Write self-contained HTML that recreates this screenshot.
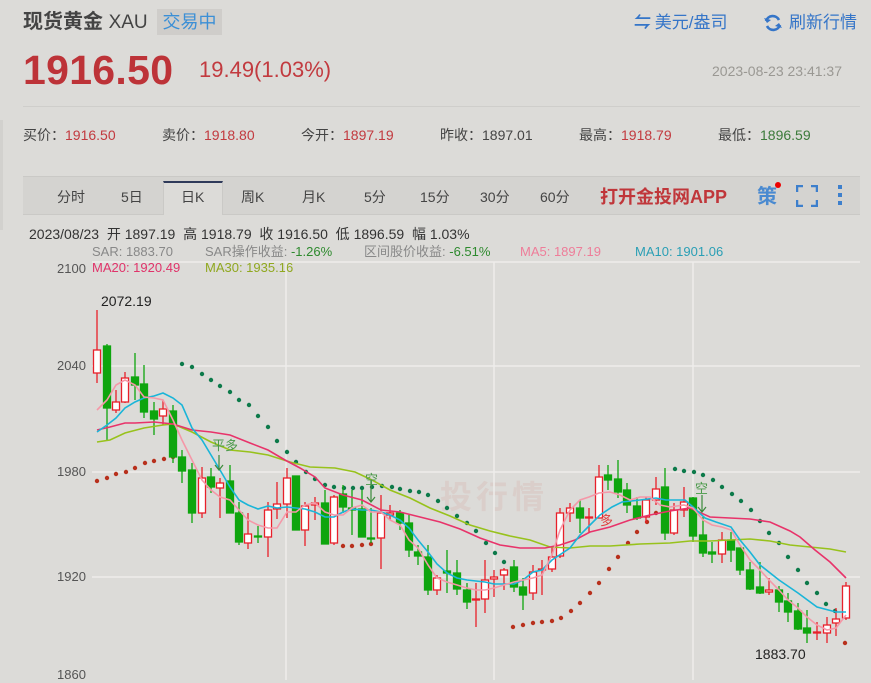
<!DOCTYPE html>
<html><head><meta charset="utf-8"><style>
*{margin:0;padding:0;box-sizing:border-box}
body{width:871px;height:680px;overflow:hidden;background:#dcdbd8;font-family:"Liberation Sans","Noto Sans CJK SC",sans-serif;position:relative;color:#333}
.a{position:absolute;white-space:nowrap}
.r{color:#c23a3f}.g{color:#3b7a3a}
</style></head><body>
<div class="a" style="left:0;top:120px;width:3px;height:110px;background:#d2d1ce"></div>
<div class="a" style="left:23px;top:9px;font-size:20px;font-weight:bold;color:#444;line-height:26px">现货黄金 <span style="font-weight:normal;font-size:19px">XAU</span></div>
<div class="a" style="left:157px;top:9px;width:65px;height:26px;background:#cfcdca;color:#3b8fd6;font-size:18px;line-height:26px;text-align:center">交易中</div>
<div class="a" style="left:634px;top:11px;font-size:17px;color:#3575c8;line-height:24px"><span style="font-weight:bold;letter-spacing:-1px">⇋</span> 美元/盎司</div>
<svg class="a" style="left:763px;top:13px" width="20" height="20" viewBox="0 0 20 20"><path d="M16 7A7 7 0 0 0 3 8M4 13a7 7 0 0 0 13-1" fill="none" stroke="#3575c8" stroke-width="2.6"/><path d="M1 5l3 5 4-3zM19 15l-3-5-4 3z" fill="#3575c8"/></svg>
<div class="a" style="left:789px;top:11px;font-size:17px;color:#3575c8;line-height:24px">刷新行情</div>
<div class="a r" style="left:23px;top:47px;font-size:41px;font-weight:bold;line-height:46px;color:#bd3338;letter-spacing:0.3px">1916.50</div>
<div class="a r" style="left:199px;top:56px;font-size:22px;line-height:28px">19.49(1.03%)</div>
<div class="a" style="left:712px;top:62px;font-size:14px;color:#9a9893;line-height:18px">2023-08-23 23:41:37</div>
<div class="a" style="left:23px;top:106px;width:837px;height:1px;background:#cfcecb"></div>
<div class="a" style="left:23px;top:126px;font-size:14px;line-height:18px;color:#444">买价：<span class="r">1916.50</span></div>
<div class="a" style="left:162px;top:126px;font-size:14px;line-height:18px;color:#444">卖价：<span class="r">1918.80</span></div>
<div class="a" style="left:301px;top:126px;font-size:14px;line-height:18px;color:#444">今开：<span class="r">1897.19</span></div>
<div class="a" style="left:440px;top:126px;font-size:14px;line-height:18px;color:#444">昨收：1897.01</div>
<div class="a" style="left:579px;top:126px;font-size:14px;line-height:18px;color:#444">最高：<span class="r">1918.79</span></div>
<div class="a" style="left:718px;top:126px;font-size:14px;line-height:18px;color:#444">最低：<span class="g">1896.59</span></div>
<div class="a" style="left:23px;top:176px;width:837px;height:39px;background:#d4d3d0;border-top:1px solid #cac9c6;border-bottom:1px solid #cac9c6"></div>
<div class="a" style="left:163px;top:181px;width:60px;height:34px;background:#dcdbd8;border-top:2px solid #2f3a5a;border-left:1px solid #cac9c6;border-right:1px solid #cac9c6"></div>
<div class="a" style="top:187px;font-size:14px;line-height:20px;color:#444;left:0;width:600px">
<span class="a" style="left:57px">分时</span><span class="a" style="left:121px">5日</span><span class="a" style="left:181px">日K</span><span class="a" style="left:241px">周K</span><span class="a" style="left:302px">月K</span><span class="a" style="left:364px">5分</span><span class="a" style="left:420px">15分</span><span class="a" style="left:480px">30分</span><span class="a" style="left:540px">60分</span></div>
<div class="a" style="left:600px;top:185px;font-size:18px;font-weight:bold;color:#c0363a;line-height:24px">打开金投网APP</div>
<div class="a" style="left:757px;top:184px;font-size:20px;color:#4a8ad0;line-height:26px;font-weight:bold">策</div>
<div class="a" style="left:775px;top:182px;width:6px;height:6px;border-radius:3px;background:#e00"></div>
<svg class="a" style="left:796px;top:185px" width="22" height="22"><path d="M1 7V1h6M15 1h6v6M21 15v6h-6M7 21H1v-6" fill="none" stroke="#3d7fcc" stroke-width="2.5"/></svg>
<div class="a" style="left:838px;top:185px;width:4px;height:4px;background:#3d7fcc;box-shadow:0 8px #3d7fcc,0 16px #3d7fcc"></div>
<div class="a" style="left:29px;top:225px;font-size:14px;line-height:18px;color:#333">2023/08/23&nbsp; 开 1897.19&nbsp; 高 1918.79&nbsp; 收 1916.50&nbsp; 低 1896.59&nbsp; 幅 1.03%</div>
<div class="a" style="left:92px;top:244px;font-size:13px;line-height:16px;color:#888">SAR: 1883.70</div>
<div class="a" style="left:205px;top:244px;font-size:13px;line-height:16px;color:#888">SAR操作收益: <span style="color:#2e8a2e">-1.26%</span></div>
<div class="a" style="left:364px;top:244px;font-size:13px;line-height:16px;color:#888">区间股价收益: <span style="color:#2e8a2e">-6.51%</span></div>
<div class="a" style="left:520px;top:244px;font-size:13px;line-height:16px;color:#ee7d99">MA5: 1897.19</div>
<div class="a" style="left:635px;top:244px;font-size:13px;line-height:16px;color:#2a9fb5">MA10: 1901.06</div>
<div class="a" style="left:92px;top:260px;font-size:13px;line-height:16px;color:#e0336a">MA20: 1920.49</div>
<div class="a" style="left:205px;top:260px;font-size:13px;line-height:16px;color:#90a820">MA30: 1935.16</div>
<div class="a" style="left:57px;top:261px;font-size:13px;color:#555;line-height:16px">2100</div>
<div class="a" style="left:57px;top:358px;font-size:13px;color:#555;line-height:16px">2040</div>
<div class="a" style="left:57px;top:464px;font-size:13px;color:#555;line-height:16px">1980</div>
<div class="a" style="left:57px;top:569px;font-size:13px;color:#555;line-height:16px">1920</div>
<div class="a" style="left:57px;top:667px;font-size:13px;color:#555;line-height:16px">1860</div>
<div class="a" style="left:101px;top:292px;font-size:14px;color:#222;line-height:18px">2072.19</div>
<div class="a" style="left:755px;top:645px;font-size:14px;color:#222;line-height:18px">1883.70</div>
<div class="a" style="left:440px;top:478px;font-size:32px;color:rgba(210,150,140,.18);line-height:38px;font-weight:bold;letter-spacing:4px">投行情</div>
<svg class="a" style="left:0;top:0" width="871" height="680">
<g stroke="#eeedeb" stroke-width="1.5" fill="none">
<path d="M92 262H860M92 366H860M92 472H860M92 577H860M286 262V680M494 262V680M693 262V680"/>
</g>
<g fill="#0d7a4a">
<circle cx="182" cy="364" r="2.2"/><circle cx="192" cy="367" r="2.2"/><circle cx="202" cy="374" r="2.2"/><circle cx="211" cy="380" r="2.2"/><circle cx="220" cy="386" r="2.2"/><circle cx="230" cy="392" r="2.2"/><circle cx="239" cy="400" r="2.2"/><circle cx="249" cy="405" r="2.2"/><circle cx="258" cy="416" r="2.2"/><circle cx="268" cy="427" r="2.2"/><circle cx="277" cy="441" r="2.2"/><circle cx="287" cy="452" r="2.2"/><circle cx="296" cy="462" r="2.2"/><circle cx="306" cy="472" r="2.2"/><circle cx="315" cy="479" r="2.2"/><circle cx="325" cy="485" r="2.2"/><circle cx="334" cy="487" r="2.2"/><circle cx="344" cy="488" r="2.2"/><circle cx="353" cy="488" r="2.2"/><circle cx="362" cy="488" r="2.2"/><circle cx="372" cy="487" r="2.2"/><circle cx="382" cy="486" r="2.2"/><circle cx="392" cy="487" r="2.2"/><circle cx="400" cy="489" r="2.2"/><circle cx="410" cy="491" r="2.2"/><circle cx="419" cy="492" r="2.2"/><circle cx="428" cy="495" r="2.2"/><circle cx="438" cy="501" r="2.2"/><circle cx="447" cy="508" r="2.2"/><circle cx="457" cy="516" r="2.2"/><circle cx="467" cy="523" r="2.2"/><circle cx="476" cy="531" r="2.2"/><circle cx="486" cy="543" r="2.2"/><circle cx="495" cy="553" r="2.2"/><circle cx="504" cy="562" r="2.2"/>
<circle cx="675" cy="469" r="2.2"/><circle cx="684" cy="471" r="2.2"/><circle cx="694" cy="472" r="2.2"/><circle cx="703" cy="475" r="2.2"/><circle cx="713" cy="480" r="2.2"/><circle cx="722" cy="487" r="2.2"/><circle cx="732" cy="494" r="2.2"/><circle cx="741" cy="501" r="2.2"/><circle cx="751" cy="510" r="2.2"/><circle cx="760" cy="521" r="2.2"/><circle cx="769" cy="533" r="2.2"/><circle cx="779" cy="543" r="2.2"/><circle cx="788" cy="557" r="2.2"/><circle cx="798" cy="570" r="2.2"/><circle cx="807" cy="583" r="2.2"/><circle cx="817" cy="593" r="2.2"/><circle cx="826" cy="604" r="2.2"/><circle cx="835" cy="611" r="2.2"/>
</g>
<g fill="#b8301c">
<circle cx="97" cy="481" r="2.2"/><circle cx="107" cy="478" r="2.2"/><circle cx="116" cy="474" r="2.2"/><circle cx="126" cy="472" r="2.2"/><circle cx="135" cy="468" r="2.2"/><circle cx="145" cy="463" r="2.2"/><circle cx="154" cy="461" r="2.2"/><circle cx="164" cy="459" r="2.2"/><circle cx="173" cy="457" r="2.2"/>
<circle cx="343" cy="546" r="2.2"/><circle cx="352" cy="546" r="2.2"/><circle cx="362" cy="545" r="2.2"/><circle cx="371" cy="544" r="2.2"/>
<circle cx="513" cy="627" r="2.2"/><circle cx="523" cy="625" r="2.2"/><circle cx="533" cy="623" r="2.2"/><circle cx="542" cy="622" r="2.2"/><circle cx="552" cy="621" r="2.2"/><circle cx="561" cy="618" r="2.2"/><circle cx="571" cy="611" r="2.2"/><circle cx="580" cy="603" r="2.2"/><circle cx="590" cy="593" r="2.2"/><circle cx="599" cy="583" r="2.2"/><circle cx="609" cy="569" r="2.2"/><circle cx="618" cy="557" r="2.2"/><circle cx="628" cy="543" r="2.2"/><circle cx="637" cy="532" r="2.2"/><circle cx="647" cy="522" r="2.2"/><circle cx="656" cy="513" r="2.2"/><circle cx="845" cy="643" r="2.2"/>
</g>
<g stroke-width="1.3">
<g stroke="#e8202a" fill="#fff">
<path d="M97 310V383M116 390V413M125 372V403M163 400V425M202 467V518M220 478V518M248 513V549M268 502V557M277 482V519M287 468V518M305 502V546M315 497V520M334 495V545M381 495V569M390 505V520M437 575V595M476 583V627M485 560V613M494 570V597M504 568V590M533 565V600M542 560V595M552 547V572M560 508V558M570 503V522M589 508V533M599 465V518M646 497V523M656 477V505M674 503V535M684 487V517M722 532V563M769 578V595M817 622V640M827 617V643M836 608V636M846 582V620"/>
<rect x="93.5" y="350" width="7" height="23"/><rect x="112.5" y="402" width="7" height="8"/><rect x="121.5" y="378" width="7" height="24"/><rect x="159.5" y="409" width="7" height="7"/><rect x="198.5" y="478" width="7" height="35"/><rect x="216.5" y="483" width="7" height="5"/><rect x="244.5" y="534" width="7" height="9"/><rect x="264.5" y="510" width="7" height="27"/><rect x="273.5" y="504" width="7" height="5"/><rect x="283.5" y="478" width="7" height="26"/><rect x="301.5" y="506" width="7" height="24"/><rect x="311.5" y="503" width="7" height="2"/><rect x="330.5" y="497" width="7" height="46"/><rect x="377.5" y="513" width="7" height="25"/><rect x="386.5" y="513" width="7" height="2"/><rect x="433.5" y="578" width="7" height="12"/><rect x="472.5" y="599" width="7" height="1"/><rect x="481.5" y="580" width="7" height="19"/><rect x="490.5" y="577" width="7" height="2"/><rect x="500.5" y="570" width="7" height="5"/><rect x="529.5" y="572" width="7" height="21"/><rect x="538.5" y="569" width="7" height="1"/><rect x="548.5" y="557" width="7" height="12"/><rect x="556.5" y="513" width="7" height="43"/><rect x="566.5" y="508" width="7" height="5"/><rect x="585.5" y="517" width="7" height="1"/><rect x="595.5" y="477" width="7" height="41"/><rect x="642.5" y="500" width="7" height="17"/><rect x="652.5" y="489" width="7" height="11"/><rect x="670.5" y="510" width="7" height="23"/><rect x="680.5" y="502" width="7" height="8"/><rect x="718.5" y="540" width="7" height="14"/><rect x="765.5" y="590" width="7" height="2"/><rect x="813.5" y="632" width="7" height="1"/><rect x="823.5" y="625" width="7" height="8"/><rect x="832.5" y="619" width="7" height="4"/><rect x="842.5" y="586" width="7" height="32"/>
</g>
<g stroke="#0ea50e" fill="#0ea50e">
<path d="M107 344V440M135 353V400M144 365V418M154 402V435M173 405V463M182 450V483M192 463V523M211 468V493M230 465V513M239 502V545M258 526V543M296 476V530M325 490V544M343 485V513M352 490V535M362 490V537M371 508V543M400 510V530M409 515V557M418 545V565M428 545V595M447 550V593M457 560V595M467 583V609M514 560V592M523 578V610M580 500V533M608 465V490M618 460V498M627 483V513M637 497V520M665 468V540M693 497V542M703 517V557M712 542V563M731 532V562M740 548V575M750 562V590M760 562V594M779 586V612M788 593V622M798 603V630M807 610V643"/>
<rect x="103.5" y="346" width="7" height="62"/><rect x="131.5" y="377" width="7" height="8"/><rect x="140.5" y="384" width="7" height="28"/><rect x="150.5" y="411" width="7" height="8"/><rect x="169.5" y="411" width="7" height="46"/><rect x="178.5" y="457" width="7" height="14"/><rect x="188.5" y="470" width="7" height="43"/><rect x="207.5" y="477" width="7" height="10"/><rect x="226.5" y="481" width="7" height="32"/><rect x="235.5" y="513" width="7" height="29"/><rect x="254.5" y="536" width="7" height="1"/><rect x="292.5" y="476" width="7" height="54"/><rect x="321.5" y="503" width="7" height="41"/><rect x="339.5" y="494" width="7" height="13"/><rect x="348.5" y="508" width="7" height="2"/><rect x="358.5" y="509" width="7" height="28"/><rect x="367.5" y="538" width="7" height="1"/><rect x="396.5" y="513" width="7" height="10"/><rect x="405.5" y="523" width="7" height="27"/><rect x="414.5" y="552" width="7" height="4"/><rect x="424.5" y="557" width="7" height="33"/><rect x="443.5" y="571" width="7" height="2"/><rect x="453.5" y="573" width="7" height="16"/><rect x="463.5" y="590" width="7" height="12"/><rect x="510.5" y="567" width="7" height="20"/><rect x="519.5" y="587" width="7" height="8"/><rect x="576.5" y="508" width="7" height="10"/><rect x="604.5" y="475" width="7" height="5"/><rect x="614.5" y="479" width="7" height="13"/><rect x="623.5" y="490" width="7" height="15"/><rect x="633.5" y="506" width="7" height="12"/><rect x="661.5" y="487" width="7" height="46"/><rect x="689.5" y="498" width="7" height="38"/><rect x="699.5" y="535" width="7" height="18"/><rect x="708.5" y="552" width="7" height="2"/><rect x="727.5" y="540" width="7" height="10"/><rect x="736.5" y="548" width="7" height="22"/><rect x="746.5" y="570" width="7" height="19"/><rect x="756.5" y="587" width="7" height="6"/><rect x="775.5" y="590" width="7" height="12"/><rect x="784.5" y="601" width="7" height="11"/><rect x="794.5" y="611" width="7" height="18"/><rect x="803.5" y="628" width="7" height="5"/>
</g></g>
<g fill="none" stroke-width="1.6">
<polyline stroke="#98c21c" points="97,442 110,440 125,433 144,428 163,425 173,424 192,432 211,442 230,450 250,452 268,455 290,462 310,467 335,468 355,472 372,480 390,490 410,498 430,508 450,516 470,525 490,531 510,536 530,540 550,547 570,548 590,546 610,546 640,544 670,543 690,541 710,541 730,540 750,539 770,541 790,545 810,547 830,549 846,552"/>
<polyline stroke="#e8336a" points="97,430 110,427 125,423 135,423 154,422 173,424 192,430 211,432 230,435 250,443 268,450 285,460 300,468 315,477 325,488 343,495 362,500 381,510 400,512 420,517 440,522 460,529 480,538 500,545 520,548 545,548 560,545 575,540 590,532 610,527 630,520 650,515 670,511 690,508 710,517 730,518 750,519 770,522 790,531 800,537 815,550 830,562 846,578"/>
<polyline stroke="#1ab5d8" points="97,432 107,425 116,418 125,408 135,402 144,398 154,396 163,393 173,398 182,405 192,428 202,440 211,455 220,470 230,487 239,500 248,505 258,509 268,506 277,508 287,507 296,508 305,509 315,512 325,517 334,517 343,512 352,509 362,510 371,510 381,512 390,515 400,520 409,528 418,540 428,552 437,564 447,573 457,578 467,580 476,581 485,582 494,584 504,584 514,584 523,580 533,572 542,570 552,560 570,548 580,535 590,525 600,515 612,507 622,502 640,500 656,498 666,500 685,500 693,507 705,518 716,522 731,527 740,540 750,552 760,565 779,580 798,593 817,607 836,612 846,612"/>
<polyline stroke="#f598a8" points="97,410 107,400 116,385 125,380 135,385 144,397 154,398 163,400 173,420 182,440 192,460 202,480 211,490 220,497 230,500 239,510 248,520 258,525 268,528 277,528 287,512 296,512 305,505 315,503 325,512 334,515 343,515 352,508 362,505 371,512 381,512 390,520 400,525 409,540 418,548 428,565 437,578 447,582 457,585 467,588 476,590 485,590 494,588 504,585 514,582 523,580 533,578 542,575 552,555 560,530 570,510 580,500 589,497 599,493 610,492 620,495 630,500 640,497 650,497 660,505 670,507 684,505 693,508 703,520 712,525 722,527 731,530 740,545 750,560 760,570 769,580 779,590 788,600 798,608 807,617 817,625 827,630 836,628 846,615"/>
</g>
<g stroke="#3a8a3a" stroke-width="1.2" fill="none"><path d="M219 455V470M215 465l4 5 4-5M371 480V502M367 497l4 5 4-5M702 495V512M698 507l4 5 4-5"/></g>
<text x="212" y="450" font-size="13" fill="#4a9a4a" font-family="Liberation Sans,Noto Sans CJK SC,sans-serif">平多</text>
<text x="365" y="484" font-size="13" fill="#4a9a4a" font-family="Liberation Sans,Noto Sans CJK SC,sans-serif">空</text>
<text x="695" y="493" font-size="13" fill="#4a9a4a" font-family="Liberation Sans,Noto Sans CJK SC,sans-serif">空</text>
<text x="600" y="525" font-size="13" fill="#e04040" font-family="Liberation Sans,Noto Sans CJK SC,sans-serif">多</text>
</svg>
</body></html>
